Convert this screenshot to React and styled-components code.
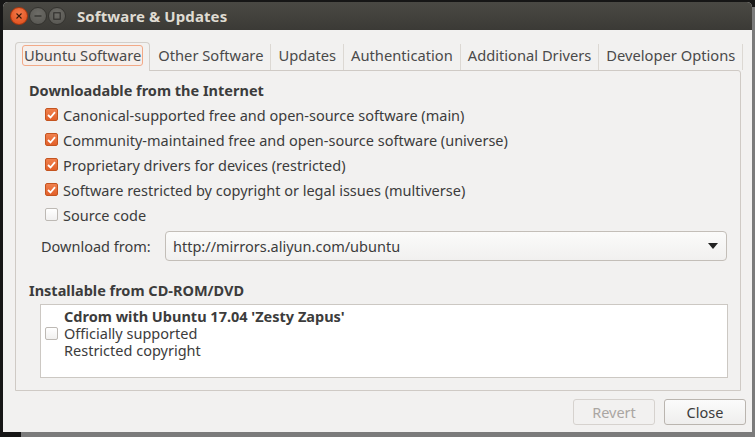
import React from "react";
import styled, { createGlobalStyle } from "styled-components";

const Global = createGlobalStyle`
  html, body { margin: 0; padding: 0; background: #161616; }
  body { width: 755px; height: 437px; overflow: hidden; font-family: "Noto Sans", "DejaVu Sans", sans-serif; }
`;

const Desktop = styled.div`
  width: 755px;
  height: 437px;
  padding: 2px 3px 0 3px;
  box-sizing: border-box;
`;

const Window = styled.div`
  width: 749px;
  height: 430px;
  background: #f2f1f0;
  border-radius: 5px 5px 0 0;
  display: flex;
  flex-direction: column;
  box-shadow: 18px 5px 0 0 #7b7b7b;
  color: #3c3c3c;
  font-size: 14px;
`;

const TitleBar = styled.div`
  height: 28px;
  flex: none;
  background: linear-gradient(#4a4944, #3b3a36);
  border-radius: 5px 5px 0 0;
  display: flex;
  align-items: center;
  padding-left: 7px;
  gap: 1px;
`;

const WinButton = styled.span`
  width: 18px;
  height: 18px;
  border-radius: 50%;
  box-sizing: border-box;
  display: flex;
  align-items: center;
  justify-content: center;
  background: ${(p) =>
    p.$close
      ? "radial-gradient(circle at 50% 35%, #f37a4a, #dc4a17)"
      : "radial-gradient(circle at 50% 35%, #6d6c67, #55544f)"};
  border: 1px solid ${(p) => (p.$close ? "#a8370f" : "#34332f")};
`;

const Title = styled.span`
  margin-left: 10px;
  color: #dfdbd2;
  font-weight: bold;
  font-size: 15px;
  letter-spacing: 0.1px;
`;

const Body = styled.div`
  flex: 1;
  display: flex;
  flex-direction: column;
  padding: 12px 6px 7px 12px;
`;

const Tabs = styled.div`
  display: flex;
  height: 28px;
  align-items: stretch;
`;

const Tab = styled.div`
  display: flex;
  flex: none;
  white-space: nowrap;
  align-items: center;
  font-size: 14.7px;
  color: #4a4a4a;
  box-sizing: border-box;
  padding-bottom: 3px;
  ${(p) =>
    p.$active
      ? `
    border: 1px solid #d3cfca;
    border-bottom: none;
    border-radius: 4px 4px 0 0;
    padding-left: 6px;
    padding-right: 6px;
    margin-bottom: -1px;
    background: #f2f1f0;
    position: relative;
    z-index: 1;
    margin-right: 1px;
  `
      : `
    padding-left: 7px;
    padding-right: 7px;
    border-right: 1px solid #dcd8d3;
    margin-top: 2px;
    padding-bottom: 5px;
  `}
`;

const Focus = styled.span`
  border: 1px solid #f2a987;
  border-radius: 3px;
  padding: 0 1px;
  line-height: 19px;
  background: #f5efec;
`;

const Panel = styled.div`
  width: 726px;
  box-sizing: border-box;
  height: 321px;
  border: 1px solid #cfcac5;
  border-radius: 0 3px 0 0;
  padding: 9px 13px 0 13px;
  display: flex;
  flex-direction: column;
`;

const Header = styled.div`
  font-weight: bold;
  font-size: 14.5px;
  line-height: 20px;
  margin-top: ${(p) => p.$mt || 0}px;
`;

const CheckList = styled.div`
  margin-top: 2px;
  padding-left: 16px;
  display: flex;
  flex-direction: column;
`;

const CheckRow = styled.label`
  height: 25px;
  display: flex;
  align-items: center;
  gap: 5px;
  font-size: 14.5px;
`;

const Box = styled.span`
  width: 13px;
  height: 13px;
  flex: none;
  box-sizing: border-box;
  border-radius: 2px;
  display: flex;
  align-items: center;
  justify-content: center;
  border: 1px solid ${(p) => (p.$checked ? "#c4541f" : "#bdb9b4")};
  background: ${(p) =>
    p.$checked ? "linear-gradient(#f0804d, #e2602a)" : "linear-gradient(#ffffff, #f1f0ef)"};
`;

const Check = ({ checked }) => (
  <Box $checked={checked}>
    {checked && (
      <svg width="9" height="8" viewBox="0 0 9 8">
        <path d="M1 4 L3.5 6.5 L8 1.2" fill="none" stroke="#fff" strokeWidth="1.8" />
      </svg>
    )}
  </Box>
);

const DownloadRow = styled.div`
  margin-top: 4px;
  margin-left: 12px;
  display: flex;
  align-items: center;
`;

const Label = styled.span`
  width: 124px;
  font-size: 14.5px;
`;

const Combo = styled.div`
  flex: none;
  width: 562px;
  height: 30px;
  box-sizing: border-box;
  border: 1px solid #c3beb8;
  border-radius: 4px;
  background: linear-gradient(#fbfbfa, #f1f0ef);
  display: flex;
  align-items: center;
  justify-content: space-between;
  padding: 0 8px 0 7px;
  font-size: 14.5px;
`;

const ListBox = styled.div`
  margin: 4px 0 0 11px;
  width: 688px;
  height: 74px;
  box-sizing: border-box;
  background: #fff;
  border: 1px solid #ccc8c3;
  padding: 3px 0 0 4px;
`;

const Item = styled.div`
  display: flex;
  align-items: center;
  gap: 6px;
`;

const ItemLines = styled.div`
  display: flex;
  flex-direction: column;
  font-size: 14.5px;
  line-height: 17px;
`;

const Strong = styled.span`
  font-weight: bold;
`;

const Buttons = styled.div`
  margin-top: 8px;
  display: flex;
  justify-content: flex-end;
  gap: 9px;
`;

const Button = styled.div`
  width: 82px;
  height: 26px;
  box-sizing: border-box;
  border-radius: 3px;
  display: flex;
  align-items: center;
  justify-content: center;
  font-size: 14.5px;
  border: 1px solid ${(p) => (p.$disabled ? "#d6d2ce" : "#bab5af")};
  color: ${(p) => (p.$disabled ? "#aaa6a2" : "#3c3c3c")};
  background: ${(p) => (p.$disabled ? "#f2f1f0" : "linear-gradient(#fbfbfb, #efeeed)")};
`;

const tabs = ["Other Software", "Updates", "Authentication", "Additional Drivers", "Developer Options"];
const sources = [
  ["Canonical-supported free and open-source software (main)", true],
  ["Community-maintained free and open-source software (universe)", true],
  ["Proprietary drivers for devices (restricted)", true],
  ["Software restricted by copyright or legal issues (multiverse)", true],
  ["Source code", false],
];

export default function App() {
  return (
    <Desktop>
      <Global />
      <Window>
        <TitleBar>
          <WinButton $close>
            <svg width="8" height="8" viewBox="0 0 8 8">
              <path d="M1.5 1.5 L6.5 6.5 M6.5 1.5 L1.5 6.5" stroke="#3a1a0a" strokeWidth="1.1" />
            </svg>
          </WinButton>
          <WinButton>
            <svg width="8" height="8" viewBox="0 0 8 8">
              <path d="M0.5 4 H7.5" stroke="#2e2d2a" strokeWidth="1.2" />
            </svg>
          </WinButton>
          <WinButton>
            <svg width="8" height="8" viewBox="0 0 8 8">
              <rect x="0.8" y="0.8" width="6.4" height="6.4" fill="none" stroke="#2e2d2a" strokeWidth="1.1" />
            </svg>
          </WinButton>
          <Title>Software &amp; Updates</Title>
        </TitleBar>
        <Body>
          <Tabs>
            <Tab $active>
              <Focus>Ubuntu Software</Focus>
            </Tab>
            {tabs.map((t) => (
              <Tab key={t}>{t}</Tab>
            ))}
          </Tabs>
          <Panel>
            <Header>Downloadable from the Internet</Header>
            <CheckList>
              {sources.map(([t, c]) => (
                <CheckRow key={t}>
                  <Check checked={c} />
                  {t}
                </CheckRow>
              ))}
            </CheckList>
            <DownloadRow>
              <Label>Download from:</Label>
              <Combo>
                <span>http://mirrors.aliyun.com/ubuntu</span>
                <svg width="10" height="6" viewBox="0 0 10 6">
                  <path d="M0 0 H10 L5 6 Z" fill="#222" />
                </svg>
              </Combo>
            </DownloadRow>
            <Header $mt={19}>Installable from CD-ROM/DVD</Header>
            <ListBox>
              <Item>
                <Check checked={false} />
                <ItemLines>
                  <Strong>Cdrom with Ubuntu 17.04 'Zesty Zapus'</Strong>
                  <span>Officially supported</span>
                  <span>Restricted copyright</span>
                </ItemLines>
              </Item>
            </ListBox>
          </Panel>
          <Buttons>
            <Button $disabled>Revert</Button>
            <Button>Close</Button>
          </Buttons>
        </Body>
      </Window>
    </Desktop>
  );
}
